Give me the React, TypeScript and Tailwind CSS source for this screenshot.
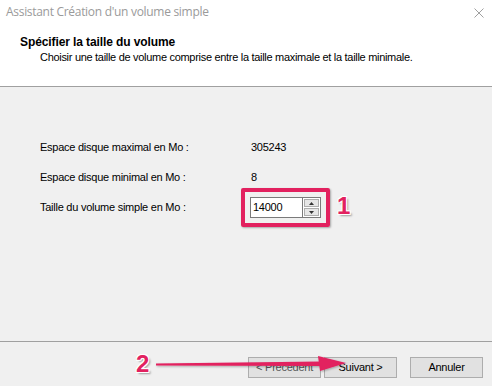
import React from "react";

const sans = { fontFamily: '"Liberation Sans", Arial, sans-serif' };

export default function App() {
  return (
    <div
      className="relative w-[492px] h-[386px] overflow-hidden bg-[#f0f0f0] flex flex-col text-[11px] text-black tracking-[-0.25px]"
      style={sans}
    >
      {/* Title bar */}
      <div className="h-[24px] bg-white flex items-center justify-between pl-[6px] pr-[8px]">
        <span
          className="text-[12px] text-[#9a9a9a] tracking-[-0.3px]"
          style={{ fontFamily: '"Open Sans", "Noto Sans", sans-serif' }}
        >
          Assistant Création d'un volume simple
        </span>
        <svg width="10" height="10" viewBox="0 0 10 10" className="mt-[1px]">
          <path d="M0.5 0.5 L9.5 9.5 M9.5 0.5 L0.5 9.5" stroke="#a0a0a0" strokeWidth="1" />
        </svg>
      </div>
      {/* Header */}
      <div className="h-[63px] bg-white border-b border-[#a0a0a0] pl-[20px] pt-[12px]">
        <div className="font-bold text-[12px] leading-[13px] tracking-[-0.1px]">Spécifier la taille du volume</div>
        <div className="pl-[20px] leading-[13px] mt-[2px] text-[11px] tracking-[-0.3px]">
          Choisir une taille de volume comprise entre la taille maximale et la taille minimale.
        </div>
      </div>
      {/* Body */}
      <div className="flex-1 pl-[40px] pt-[53px] flex flex-col">
        <div className="flex items-center h-[14px]">
          <span className="w-[211px]">Espace disque maximal en Mo :</span>
          <span>305243</span>
        </div>
        <div className="flex items-center h-[14px] mt-[16px]">
          <span className="w-[211px]">Espace disque minimal en Mo :</span>
          <span>8</span>
        </div>
        <div className="flex items-center mt-[13px]">
          <span className="w-[210px]">Taille du volume simple en Mo :</span>
          <div className="relative flex h-[21px] items-stretch">
            <div className="w-[53px] bg-white border border-[#7a7a7a] flex items-center pl-[2px]">
              14000
            </div>
            <div className="w-[18px] border border-l-0 border-[#7a7a7a] bg-white flex flex-col p-[1px] gap-[1px]">
              <div className="flex-1 bg-[#e6e6e6] border border-[#adadad] flex items-center justify-center">
                <svg width="5" height="3" viewBox="0 0 5 3">
                  <path d="M0 3 L2.5 0 L5 3 Z" fill="#333" />
                </svg>
              </div>
              <div className="flex-1 bg-[#e6e6e6] border border-[#adadad] flex items-center justify-center">
                <svg width="5" height="3" viewBox="0 0 5 3">
                  <path d="M0 0 L2.5 3 L5 0 Z" fill="#333" />
                </svg>
              </div>
            </div>
            {/* pink highlight */}
            <div className="absolute left-[-9px] top-[-9px] w-[89px] h-[39px] border-[4px] border-[#e2215f] rounded-[2px] shadow-[1px_1px_2px_rgba(0,0,0,0.3)]" />
            <span
              className="absolute left-[87px] top-[-3px] text-[24px] font-bold text-[#e2215f] leading-none"
              style={{
                textShadow:
                  "1px 1px 0 #fff, -1px -1px 0 #fff, 1px -1px 0 #fff, -1px 1px 0 #fff, 2px 2px 2px rgba(0,0,0,0.35)",
              }}
            >
              1
            </span>
          </div>
        </div>
      </div>
      {/* Footer */}
      <div className="h-[45px] border-t border-[#a0a0a0] flex items-start justify-end pt-[15px] pr-[9px] gap-[2px] relative">
        <button className="w-[73px] h-[21px] bg-[#e1e1e1] border border-[#adadad] text-[11px] text-[#555]">
          &lt; Précédent
        </button>
        <button className="w-[73px] h-[21px] bg-[#e1e1e1] border border-[#adadad] text-[11px] ml-[1px]">
          Suivant &gt;
        </button>
        <button className="w-[73px] h-[21px] bg-[#e1e1e1] border border-[#adadad] text-[11px] ml-[11px]">
          Annuler
        </button>
        {/* arrow overlay */}
        <svg
          className="absolute left-[150px] top-[10px]"
          width="205"
          height="24"
          viewBox="0 0 205 24"
        >
          <defs>
            <filter id="sh" x="-10%" y="-50%" width="120%" height="200%">
              <feDropShadow dx="1" dy="1" stdDeviation="1" floodColor="#000" floodOpacity="0.3" />
            </filter>
          </defs>
          <g filter="url(#sh)">
            <path d="M6 11.5 L172 9.5 L172 14 L6 13.5 Z" fill="#e2215f" />
            <path d="M168 4 L196 11 L170 19 Z" fill="#e2215f" />
          </g>
        </svg>
        <span
          className="absolute left-[136px] top-[10px] text-[24px] font-bold text-[#e2215f] leading-none"
          style={{
            textShadow:
              "1px 1px 0 #fff, -1px -1px 0 #fff, 1px -1px 0 #fff, -1px 1px 0 #fff, 2px 2px 2px rgba(0,0,0,0.35)",
          }}
        >
          2
        </span>
      </div>
    </div>
  );
}
